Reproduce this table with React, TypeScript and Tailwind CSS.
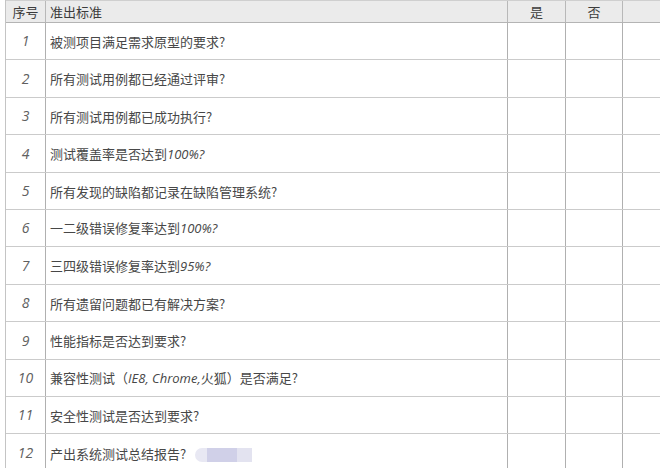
import React from "react";

type Row = { n: string; content: React.ReactNode };

const I = ({ children }: { children: React.ReactNode }) => (
  <span className="italic [font-family:'Open_Sans',sans-serif]">{children}</span>
);

const rows: Row[] = [
  { n: "1", content: <>被测项目满足需求原型的要求?</> },
  { n: "2", content: <>所有测试用例都已经通过评审?</> },
  { n: "3", content: <>所有测试用例都已成功执行?</> },
  { n: "4", content: <>测试覆盖率是否达到<I>100%?</I></> },
  { n: "5", content: <>所有发现的缺陷都记录在缺陷管理系统?</> },
  { n: "6", content: <>一二级错误修复率达到<I>100%?</I></> },
  { n: "7", content: <>三四级错误修复率达到<I>95%?</I></> },
  { n: "8", content: <>所有遗留问题都已有解决方案?</> },
  { n: "9", content: <>性能指标是否达到要求?</> },
  { n: "10", content: <>兼容性测试（<I>IE8, Chrome,</I>火狐）是否满足?</> },
  { n: "11", content: <>安全性测试是否达到要求?</> },
  {
    n: "12",
    content: (
      <>
        产出系统测试总结报告?
        <span className="ml-[9px] inline-flex h-[14px] translate-y-[3px] items-stretch">
          <span className="w-[12px] rounded-l-full bg-[#e8e8f3]" />
          <span className="w-[30px] bg-[#d0d0e8]" />
          <span className="w-[15px] bg-[#e3e3f0]" />
        </span>
      </>
    ),
  },
];

const heights = [37, 38, 37, 38, 37, 37, 38, 37, 38, 37, 37, 38];

export default function App() {
  return (
    <div className="h-[468px] w-[660px] overflow-hidden bg-white text-[#474747] [font-family:'Noto_Sans_CJK_SC','Noto_Sans',sans-serif]">
      <div className="ml-[5px] border-l border-[#c4c4c4]">
        <div className="flex h-[23px] border-b border-t border-b-[#b4b4b4] border-t-[#cfcfcf] bg-[#ebebeb] text-[13px] leading-none text-[#3c3c3c]">
          <div className="flex w-[40px] items-center justify-center border-r border-[#b8b8b8]">序号</div>
          <div className="flex w-[462px] items-center border-r border-[#b8b8b8] pl-[4px]">准出标准</div>
          <div className="flex w-[58px] items-center justify-center border-r border-[#b8b8b8]">是</div>
          <div className="flex w-[57px] items-center justify-center border-r border-[#b8b8b8]">否</div>
          <div className="flex-1" />
        </div>
        {rows.map((r, i) => (
          <div
            key={r.n}
            className={
              (heights[i] === 38 ? "h-[38px] " : "h-[37px] ") +
              "flex border-b border-[#cbcbcb] text-[13px] leading-none"
            }
          >
            <div className="flex w-[40px] items-center justify-center border-r border-[#b0b0b0] text-[14px] italic text-[#606060] [font-family:'Open_Sans',sans-serif]">
              {r.n}
            </div>
            <div className="flex w-[462px] items-center whitespace-nowrap border-r border-[#b0b0b0] pl-[4px]">
              <span>{r.content}</span>
            </div>
            <div className="w-[58px] border-r border-[#b0b0b0]" />
            <div className="w-[57px] border-r border-[#b0b0b0]" />
            <div className="flex-1" />
          </div>
        ))}
      </div>
    </div>
  );
}
